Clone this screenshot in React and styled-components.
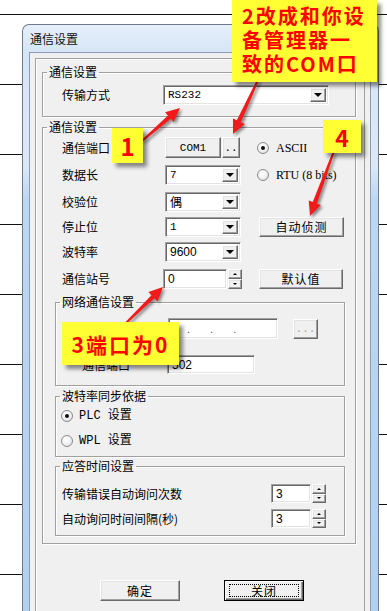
import React from "react";
import styled, { createGlobalStyle } from "styled-components";

const CJK = `"Noto Sans CJK SC", "Liberation Sans", sans-serif`;
const MONO = `"Liberation Mono", "Noto Sans CJK SC", monospace`;
const SERIF = `"Liberation Serif", "Noto Sans CJK SC", serif`;

const GlobalStyle = createGlobalStyle`
  html, body { margin: 0; padding: 0; background: #fff; }
  body { font-family: ${CJK}; font-size: 12px; color: #000; }
`;

const Page = styled.div`
  position: relative;
  width: 387px;
  height: 611px;
  overflow: hidden;
  box-sizing: border-box;
  padding: 24px 0 0 22px;
  background-color: #fff;
  background-image: repeating-linear-gradient(180deg, #111 0, #111 1px, transparent 1px, transparent 70px);
  background-position: 0 14px;
`;

const Window = styled.div`
  width: 357px;
  height: 600px;
  box-sizing: border-box;
  border: 1px solid #6b7a8c;
  border-bottom: none;
  border-radius: 7px 7px 0 0;
  padding: 0 7px 0 6px;
  display: flex;
  flex-direction: column;
  background: linear-gradient(180deg, #e6effa 0, #d6e5f6 27px, #dce8f6 140px, #bcd7f2 175px, #b1d0f0 100%);
`;

const TitleBar = styled.div`
  height: 27px;
  flex: none;
  display: flex;
  align-items: center;
  padding-left: 1px;
  font-size: 12px;
  line-height: 14px;
  color: #111;
`;

const Client = styled.div`
  flex: 1;
  display: flex;
  flex-direction: column;
  border: 1px solid #8d9db1;
  border-bottom: none;
  background: #f0f0f0;
  padding: 5px 5px 0;
`;

const Panel = styled.div`
  flex: 1;
  border: 1px solid #a0a0a0;
  box-shadow: inset 1px 1px 0 #fff;
  padding: 6px 8px 0 6px;
`;

const Group = styled.fieldset`
  margin: ${(p) => p.$mt || 0}px 0 0;
  padding: 0;
  min-width: 0;
  border: 1px solid #a0a0a0;
  box-shadow: inset 1px 1px 0 #fff, 1px 1px 0 #fff;
`;

const Legend = styled.legend`
  margin-left: 4px;
  padding: 0 2px;
  font-size: 12px;
  line-height: 14px;
`;

const GroupBody = styled.div`
  padding: ${(p) => p.$pad};
  display: flex;
  flex-direction: column;
`;

const Row = styled.div`
  display: flex;
  align-items: center;
  height: ${(p) => p.$h || 20}px;
  margin-top: ${(p) => p.$mt || 0}px;
`;

const Label = styled.span`
  width: ${(p) => p.$w}px;
  flex: none;
  font-size: 12px;
  line-height: 14px;
  white-space: nowrap;
`;

const Sunken = styled.div`
  box-sizing: border-box;
  width: ${(p) => p.$w}px;
  height: ${(p) => p.$h || 20}px;
  margin-left: ${(p) => p.$ml || 0}px;
  flex: none;
  display: flex;
  align-items: center;
  background: #fff;
  border: 1px solid;
  border-color: #a0a0a0 #fff #fff #a0a0a0;
  box-shadow: inset 1px 1px 0 #696969, inset -1px -1px 0 #e3e3e3;
  padding: 2px;
`;

const FieldText = styled.span`
  flex: 1;
  padding-left: ${(p) => p.$pl ?? 2}px;
  font-family: ${(p) => (p.$mono ? MONO : p.$cjk ? CJK : `"Liberation Sans", sans-serif`)};
  font-size: ${(p) => (p.$mono ? 11 : 12)}px;
  line-height: 16px;
  white-space: nowrap;
`;

const raised = `
  background: #f0f0f0;
  border: 1px solid;
  border-color: #fff #696969 #696969 #fff;
  box-shadow: inset -1px -1px 0 #a0a0a0, inset 1px 1px 0 #e3e3e3;
`;

const DropBtn = styled.span`
  ${raised}
  box-sizing: border-box;
  width: 16px;
  height: 100%;
  flex: none;
  display: flex;
  align-items: center;
  justify-content: center;
  &::after {
    content: "";
    border-left: 4px solid transparent;
    border-right: 4px solid transparent;
    border-top: 4px solid #000;
  }
`;

const Button = styled.button`
  ${raised}
  box-sizing: border-box;
  width: ${(p) => p.$w}px;
  height: ${(p) => p.$h || 20}px;
  margin-left: ${(p) => p.$ml || 0}px;
  flex: none;
  padding: 0;
  display: flex;
  align-items: center;
  justify-content: center;
  font-family: ${(p) => (p.$mono ? MONO : CJK)};
  font-size: ${(p) => (p.$mono ? 11 : 12)}px;
  line-height: 14px;
  color: ${(p) => (p.$disabled ? "#a0a0a0" : "#000")};
  letter-spacing: ${(p) => (p.$mono ? 0 : 1)}px;
`;

const DefaultButton = styled(Button)`
  border: 1px solid #000;
  box-shadow: inset 1px 1px 0 #fff, inset -1px -1px 0 #696969, inset -2px -2px 0 #a0a0a0;
  padding: 3px 4px;
`;

const FocusRect = styled.span`
  flex: 1;
  align-self: stretch;
  display: flex;
  align-items: center;
  justify-content: center;
  border: 1px dotted #000;
`;

const Spin = styled.span`
  width: 14px;
  height: ${(p) => p.$h || 19}px;
  margin-left: 1px;
  flex: none;
  display: flex;
  flex-direction: column;
`;

const SpinHalf = styled.span`
  ${raised}
  box-sizing: border-box;
  flex: 1;
  display: flex;
  align-items: center;
  justify-content: center;
  &::after {
    content: "";
    border-left: 2px solid transparent;
    border-right: 2px solid transparent;
    ${(p) => (p.$up ? "border-bottom: 2px solid #000;" : "border-top: 2px solid #000;")}
  }
`;

const Grid = styled.div`
  display: grid;
  grid-template-columns: 101px 94px 1fr;
  grid-template-rows: 27px 28px 25px 25px 25px 29px;
  align-items: center;
  margin-left: 7px;
`;

const Cell = styled.div`
  display: flex;
  align-items: center;
`;

const Radio = styled.label`
  display: flex;
  align-items: center;
  gap: ${(p) => p.$gap || 7}px;
  font-family: ${(p) => p.$font || SERIF};
  font-size: 12px;
  line-height: 14px;
  white-space: nowrap;
`;

const RadioDot = styled.span`
  box-sizing: border-box;
  width: 12px;
  height: 12px;
  flex: none;
  border-radius: 50%;
  border: 1px solid #8a8a8a;
  background: radial-gradient(circle at 40% 35%, #fff 0, #f3f3f3 45%, #d4d4d4 100%);
  display: flex;
  align-items: center;
  justify-content: center;
  &::after {
    content: "";
    width: 4px;
    height: 4px;
    border-radius: 50%;
    background: ${(p) => (p.$on ? "#111" : "transparent")};
  }
`;

const IpDots = styled.div`
  display: flex;
  gap: 20px;
  padding-left: 16px;
  color: #555;
  font-family: "Liberation Sans", sans-serif;
  font-size: 11px;
  line-height: 12px;
`;

const ButtonBar = styled.div`
  display: flex;
  gap: 44px;
  margin: 36px 0 0 58px;
`;

const Callout = styled.div`
  position: absolute;
  left: ${(p) => p.$x}px;
  top: ${(p) => p.$y}px;
  width: ${(p) => p.$w}px;
  height: ${(p) => p.$h}px;
  box-sizing: border-box;
  background: #ffff33;
  box-shadow: 4px 4px 4px rgba(0, 0, 0, 0.45);
  color: #ff0000;
  font-family: ${CJK};
  font-weight: 700;
  font-size: ${(p) => p.$fs}px;
  letter-spacing: ${(p) => p.$ls || 0}px;
  display: flex;
  flex-direction: column;
  justify-content: center;
  align-items: ${(p) => (p.$left ? "flex-start" : "center")};
  padding: ${(p) => p.$pad || 0};
  line-height: ${(p) => p.$lh || 24}px;
  white-space: nowrap;
`;

const Overlay = styled.svg`
  position: absolute;
  left: 0;
  top: 0;
  pointer-events: none;
  filter: drop-shadow(2px 2px 1.5px rgba(0, 0, 0, 0.45));
`;

function Arrow({ x1, y1, x2, y2 }) {
  const dx = x2 - x1;
  const dy = y2 - y1;
  const len = Math.hypot(dx, dy);
  const ux = dx / len;
  const uy = dy / len;
  const nx = -uy;
  const ny = ux;
  const L = 14;
  const bx = x2 - ux * L;
  const by = y2 - uy * L;
  const tw = 1;
  const sw = 2.2;
  const hw = 6.5;
  const pts = [
    [x1 + nx * tw, y1 + ny * tw],
    [bx + nx * sw, by + ny * sw],
    [bx + nx * hw, by + ny * hw],
    [x2, y2],
    [bx - nx * hw, by - ny * hw],
    [bx - nx * sw, by - ny * sw],
    [x1 - nx * tw, y1 - ny * tw],
  ];
  return <polygon points={pts.map((p) => p.join(",")).join(" ")} fill="#f21a1a" />;
}

function Combo({ w, ml, children, font }) {
  return (
    <Sunken $w={w} $ml={ml}>
      <FieldText $mono={font === "mono"} $cjk={font === "cjk"}>{children}</FieldText>
      <DropBtn />
    </Sunken>
  );
}

function SpinEdit({ w, h, value, ml }) {
  return (
    <>
      <Sunken $w={w} $h={h} $ml={ml}>
        <FieldText>{value}</FieldText>
      </Sunken>
      <Spin $h={h}>
        <SpinHalf $up />
        <SpinHalf />
      </Spin>
    </>
  );
}

export default function App() {
  return (
    <>
      <GlobalStyle />
      <Page>
        <Window>
          <TitleBar>通信设置</TitleBar>
          <Client>
            <Panel>
              <Group>
                <Legend>通信设置</Legend>
                <GroupBody $pad="6px 0 11px 19px">
                  <Row>
                    <Label $w={101}>传输方式</Label>
                    <Combo w={166} font="mono">RS232</Combo>
                  </Row>
                </GroupBody>
              </Group>

              <Group $mt={3}>
                <Legend>通信设置</Legend>
                <GroupBody $pad="0 10px 7px 12px">
                  <Grid>
                    <Label>通信端口</Label>
                    <Cell>
                      <Button $w={56} $h={21} $ml={2} $mono>COM1</Button>
                      <Button $w={18} $h={21} $ml={1} $mono>..</Button>
                    </Cell>
                    <Radio><RadioDot $on />ASCII</Radio>

                    <Label>数据长</Label>
                    <Combo w={76} ml={2} font="mono">7</Combo>
                    <Radio><RadioDot />RTU (8 bits)</Radio>

                    <Label>校验位</Label>
                    <Combo w={76} ml={2} font="cjk">偶</Combo>
                    <span />

                    <Label>停止位</Label>
                    <Combo w={76} ml={2} font="mono">1</Combo>
                    <Cell><Button $w={85} $ml={2}>自动侦测</Button></Cell>

                    <Label>波特率</Label>
                    <Combo w={76} ml={2}>9600</Combo>
                    <span />

                    <Label>通信站号</Label>
                    <Cell><SpinEdit w={64} h={20} value="0" /></Cell>
                    <Cell><Button $w={84} $ml={2}>默认值</Button></Cell>
                  </Grid>

                  <Group $mt={2}>
                    <Legend>网络通信设置</Legend>
                    <GroupBody $pad="9px 0 11px 26px">
                      <Row $h={21}>
                        <Label $w={86}>IP地址</Label>
                        <Sunken $w={110} $h={21}>
                          <IpDots><span>.</span><span>.</span><span>.</span></IpDots>
                        </Sunken>
                        <Button $w={25} $ml={15} $mono $disabled>...</Button>
                      </Row>
                      <Row $h={19} $mt={16}>
                        <Label $w={85}>通信端口</Label>
                        <Sunken $w={88} $h={19}>
                          <FieldText>502</FieldText>
                        </Sunken>
                      </Row>
                    </GroupBody>
                  </Group>

                  <Group $mt={3}>
                    <Legend>波特率同步依据</Legend>
                    <GroupBody $pad="0 0 3px 5px">
                      <Row $h={25}>
                        <Radio $font={MONO} $gap={6}><RadioDot $on />PLC 设置</Radio>
                      </Row>
                      <Row $h={25}>
                        <Radio $font={MONO} $gap={6}><RadioDot />WPL 设置</Radio>
                      </Row>
                    </GroupBody>
                  </Group>

                  <Group $mt={2}>
                    <Legend>应答时间设置</Legend>
                    <GroupBody $pad="8px 0 4px 6px">
                      <Row $h={25}>
                        <Label $w={209}>传输错误自动询问次数</Label>
                        <SpinEdit w={40} h={19} value="3" />
                      </Row>
                      <Row $h={25}>
                        <Label $w={209}>自动询问时间间隔(秒)</Label>
                        <SpinEdit w={40} h={19} value="3" />
                      </Row>
                    </GroupBody>
                  </Group>
                </GroupBody>
              </Group>

              <ButtonBar>
                <Button $w={80} $h={21}>确定</Button>
                <DefaultButton $w={80} $h={21}>
                  <FocusRect>关闭</FocusRect>
                </DefaultButton>
              </ButtonBar>
            </Panel>
          </Client>
        </Window>

        <Overlay width="387" height="611" viewBox="0 0 387 611">
          <Arrow x1={142} y1={141} x2={180} y2={108} />
          <Arrow x1={258} y1={80} x2={233} y2={134} />
          <Arrow x1={334} y1={151} x2={310} y2={216} />
          <Arrow x1={126} y1={323} x2={163} y2={287} />
        </Overlay>

        <Callout $x={232} $y={0} $w={145} $h={82} $fs={20} $ls={2} $left $pad="4px 0 6px 10px">
          <span>2改成和你设</span>
          <span>备管理器一</span>
          <span>致的COM口</span>
        </Callout>
        <Callout $x={112} $y={128} $w={31} $h={35} $fs={24}>1</Callout>
        <Callout $x={323} $y={120} $w={38} $h={33} $fs={23}>4</Callout>
        <Callout $x={62} $y={322} $w={117} $h={43} $fs={21} $ls={2}>3端口为0</Callout>
      </Page>
    </>
  );
}
